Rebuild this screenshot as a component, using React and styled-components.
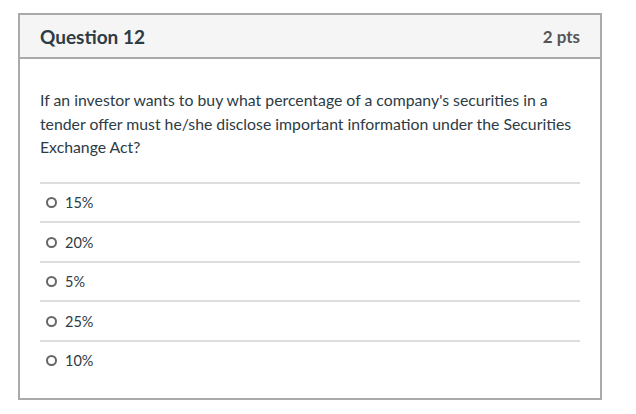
import React from "react";
import styled, { createGlobalStyle } from "styled-components";

const GlobalStyles = createGlobalStyle`
  html, body {
    margin: 0;
    padding: 0;
    background: #fff;
  }
  body {
    font-family: Lato, "Liberation Sans", sans-serif;
    color: #2d3b45;
  }
`;

const Page = styled.div`
  padding: 13px 34px 12px 18px;
`;

const QuestionBox = styled.div`
  border: 2px solid #aaaaaa;
  background: #fff;
`;

const Header = styled.div`
  display: flex;
  justify-content: space-between;
  align-items: center;
  height: 42px;
  padding: 0 20px;
  background: #f5f5f5;
  border-bottom: 2px solid #aaaaaa;
`;

const Title = styled.h2`
  margin: 0;
  font-size: 19px;
  font-weight: 700;
  color: #2d3b45;
`;

const Points = styled.span`
  font-size: 17px;
  font-weight: 700;
  color: #555;
`;

const Body = styled.div`
  padding: 29px 20px 19px 20px;
`;

const Prompt = styled.p`
  margin: 0 0 23px;
  font-size: 15.8px;
  line-height: 23.6px;
`;

const Answers = styled.div`
  display: flex;
  flex-direction: column;
`;

const Answer = styled.label`
  display: flex;
  align-items: center;
  gap: 8px;
  height: 37.5px;
  padding-left: 6px;
  border-top: 2px solid #dddddd;
  font-size: 14.5px;
`;

const Radio = styled.span`
  width: 11px;
  height: 11px;
  border: 2px solid #666;
  border-radius: 50%;
  box-sizing: border-box;
  flex-shrink: 0;
`;

const options = ["15%", "20%", "5%", "25%", "10%"];

export default function App() {
  return (
    <>
      <GlobalStyles />
      <Page>
        <QuestionBox>
          <Header>
            <Title>Question 12</Title>
            <Points>2 pts</Points>
          </Header>
          <Body>
            <Prompt>
              If an investor wants to buy what percentage of a company's securities in a
              tender offer must he/she disclose important information under the Securities
              Exchange Act?
            </Prompt>
            <Answers>
              {options.map((o) => (
                <Answer key={o}>
                  <Radio />
                  {o}
                </Answer>
              ))}
            </Answers>
          </Body>
        </QuestionBox>
      </Page>
    </>
  );
}
